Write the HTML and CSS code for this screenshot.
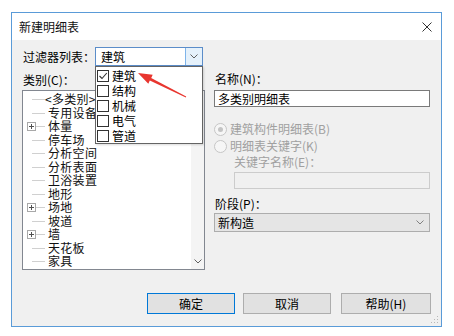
FILE: index.html
```html
<!DOCTYPE html>
<html lang="zh-CN">
<head>
<meta charset="utf-8">
<title>新建明细表</title>
<link rel="stylesheet" href="styles.css">
</head>
<body>
<div class="window">
  <div class="titlebar">
    <span class="title">新建明细表</span>
    <svg class="close" width="10" height="10" viewBox="0 0 10 10"><path d="M0.5 0.5 L9.5 9.5 M9.5 0.5 L0.5 9.5" stroke="#333" stroke-width="1" fill="none"/></svg>
  </div>
  <div class="content">
    <div class="columns">
      <div class="left">
        <div class="filter-row">
          <span class="label filter-label">过滤器列表：</span>
          <div class="combo">
            <span class="combo-text">建筑</span>
            <span class="combo-btn"><svg width="8" height="5" viewBox="0 0 8 5"><path d="M0.5 0.5 L4 4 L7.5 0.5" stroke="#606060" fill="none"/></svg></span>
          </div>
        </div>
        <div class="label cat-label">类别(C)：</div>
        <div class="tree">
          <ul class="tree-list">
            <li class="tree-item"><span class="hline"></span><span class="item-text first">&lt;多类别&gt;</span></li>
            <li class="tree-item"><span class="hline"></span><span class="item-text">专用设备</span></li>
            <li class="tree-item"><span class="plus"></span><span class="hline"></span><span class="item-text">体量</span></li>
            <li class="tree-item"><span class="hline"></span><span class="item-text">停车场</span></li>
            <li class="tree-item"><span class="hline"></span><span class="item-text">分析空间</span></li>
            <li class="tree-item"><span class="hline"></span><span class="item-text">分析表面</span></li>
            <li class="tree-item"><span class="hline"></span><span class="item-text">卫浴装置</span></li>
            <li class="tree-item"><span class="hline"></span><span class="item-text">地形</span></li>
            <li class="tree-item"><span class="plus"></span><span class="hline"></span><span class="item-text">场地</span></li>
            <li class="tree-item"><span class="hline"></span><span class="item-text">坡道</span></li>
            <li class="tree-item"><span class="plus"></span><span class="hline"></span><span class="item-text">墙</span></li>
            <li class="tree-item"><span class="hline"></span><span class="item-text">天花板</span></li>
            <li class="tree-item"><span class="hline"></span><span class="item-text">家具</span></li>
            <li class="tree-item"><span class="hline"></span><span class="item-text">家具系统</span></li>
          </ul>
          <div class="scrollbar">
            <svg width="8" height="5" viewBox="0 0 8 5"><path d="M0.5 0.5 L4 4 L7.5 0.5" stroke="#606060" fill="none"/></svg>
          </div>
        </div>
      </div>
      <div class="right">
        <div class="label name-label">名称(N)：</div>
        <div class="input name-input">多类别明细表</div>
        <div class="radio-row r1"><span class="radio checked"></span><span class="disabled-text">建筑构件明细表(B)</span></div>
        <div class="radio-row r2"><span class="radio"></span><span class="disabled-text">明细表关键字(K)</span></div>
        <div class="label key-label disabled-text">关键字名称(E)：</div>
        <div class="input key-input"></div>
        <div class="label phase-label">阶段(P)：</div>
        <div class="select">
          <span>新构造</span>
          <svg width="8" height="5" viewBox="0 0 8 5"><path d="M0.5 0.5 L4 4 L7.5 0.5" stroke="#808080" fill="none"/></svg>
        </div>
      </div>
    </div>
    <div class="buttons">
      <div class="btn btn-ok">确定</div>
      <div class="btn btn-cancel">取消</div>
      <div class="btn btn-help">帮助(H)</div>
    </div>
    <svg class="grip" width="8" height="8" viewBox="0 0 8 8">
      <rect x="6" y="0" width="1" height="1" fill="#b8b8b8"/>
      <rect x="3" y="3" width="1" height="1" fill="#b8b8b8"/>
      <rect x="6" y="3" width="1" height="1" fill="#b8b8b8"/>
      <rect x="0" y="6" width="1" height="1" fill="#b8b8b8"/>
      <rect x="3" y="6" width="1" height="1" fill="#b8b8b8"/>
      <rect x="6" y="6" width="1" height="1" fill="#b8b8b8"/>
    </svg>
  </div>
  <ul class="popup">
    <li class="pop-item"><span class="check on"><svg width="10" height="10" viewBox="0 0 10 10"><path d="M1.5 5 L4 7.5 L8.8 2" stroke="#333" stroke-width="1.1" fill="none"/></svg></span><span>建筑</span></li>
    <li class="pop-item"><span class="check"></span><span>结构</span></li>
    <li class="pop-item"><span class="check"></span><span>机械</span></li>
    <li class="pop-item"><span class="check"></span><span>电气</span></li>
    <li class="pop-item"><span class="check"></span><span>管道</span></li>
  </ul>
</div>
<svg class="arrow" width="454" height="336" viewBox="0 0 454 336">
  <polygon points="138,73 152.7,74.8 151.2,77.9 186.2,96.6 185.8,97.4 149.8,80.6 148.3,83.8" fill="#e8362f"/>
</svg>
</body>
</html>
```

FILE: styles.css
```css
* { box-sizing: border-box; margin: 0; padding: 0; }
html, body { width: 454px; height: 336px; overflow: hidden; }
body {
  position: relative;
  background: #ffffff;
  font-family: "Noto Sans CJK SC", "Microsoft YaHei", sans-serif;
  font-size: 12px;
  color: #000;
}
ul { list-style: none; }

.window {
  position: relative;
  margin: 12px 0 0 11px;
  width: 431px;
  height: 315px;
  border: 1px solid #5a9bd8;
  background: #f0f0f0;
  display: flex;
  flex-direction: column;
}
.titlebar {
  height: 27px;
  flex: none;
  background: #fff;
  display: flex;
  align-items: center;
  justify-content: space-between;
  padding: 0 9px 0 7px;
}
.title { font-size: 12px; line-height: 14px; color: #111; }
.close { display: block; }

.content {
  flex: 1;
  position: relative;
  display: flex;
  flex-direction: column;
  padding: 7px 10px 12px 10px;
}
.columns { display: flex; gap: 9px; }
.left { width: 183px; display: flex; flex-direction: column; }
.right { width: 216px; display: flex; flex-direction: column; }

.label { line-height: 14px; height: 14px; white-space: nowrap; }
.filter-row { display: flex; align-items: center; height: 19px; }
.filter-label { width: 73px; padding-left: 1px; }
.combo {
  width: 108px;
  height: 19px;
  border: 1px solid #5b8dc9;
  background: #fff;
  display: flex;
  align-items: stretch;
}
.combo-text { flex: 1; padding-left: 5px; line-height: 17px; }
.combo-btn {
  width: 17px;
  background: #e5f1fb;
  border-left: 1px solid #7eb4ea;
  display: flex;
  align-items: center;
  justify-content: center;
}
.combo-btn svg, .scrollbar svg, .select svg { display: block; }

.cat-label { margin-top: 7px; padding-left: 1px; }
.tree {
  margin-top: 3px;
  height: 180px;
  border: 1px solid #828790;
  background: #fff;
  position: relative;
  display: flex;
  overflow: hidden;
}
.tree-list { flex: 1; padding-top: 1px; position: relative; }
.tree-item {
  height: 13.5px;
  line-height: 13.5px;
  display: flex;
  align-items: center;
  position: relative;
  padding-left: 25px;
  letter-spacing: 0.3px;
  color: #111;
}
.hline {
  position: absolute;
  left: 9px;
  width: 13px;
  top: 7px;
  border-top: 1px solid #d0d0d0;
}
.plus {
  position: absolute;
  left: 4px;
  top: 3px;
  width: 9px;
  height: 9px;
  border: 1px solid #a8a8a8;
  background: #fff;
  z-index: 1;
}
.plus::before, .plus::after {
  content: "";
  position: absolute;
  background: #505050;
}
.plus::before { left: 1px; right: 1px; top: 3px; height: 1px; }
.plus::after { top: 1px; bottom: 1px; left: 3px; width: 1px; }
.item-text.first { margin-left: -3px; }
.scrollbar {
  width: 13px;
  background: #f4f4f4;
  display: flex;
  align-items: flex-end;
  justify-content: center;
  padding-bottom: 5px;
}

.name-label { margin-top: 25px; padding-left: 1px; }
.input {
  height: 17px;
  border: 1px solid #7a7a7a;
  background: #fff;
  line-height: 15px;
  padding-left: 3px;
}
.name-input { margin-top: 4px; }
.radio-row { height: 14px; display: flex; align-items: center; gap: 3px; }
.r1 { margin-top: 15px; }
.r2 { margin-top: 3px; }
.radio {
  width: 13px;
  height: 13px;
  border-radius: 50%;
  border: 1px solid #c6c6c6;
  background: #f6f6f6;
  position: relative;
}
.radio.checked::after {
  content: "";
  position: absolute;
  left: 3px;
  top: 3px;
  width: 5px;
  height: 5px;
  border-radius: 50%;
  background: #c4c4c4;
}
.disabled-text { color: #a0a0a0; line-height: 14px; }
.key-label { margin-top: 2px; padding-left: 20px; }
.key-input {
  margin-top: 3px;
  margin-left: 20px;
  background: #f0f0f0;
  border-color: #cccccc;
}
.phase-label { margin-top: 8px; padding-left: 1px; }
.select {
  margin-top: 2px;
  height: 19px;
  border: 1px solid #adadad;
  background: #e5e5e5;
  display: flex;
  align-items: center;
  justify-content: space-between;
  padding: 0 5px 0 3px;
  line-height: 17px;
}

.buttons {
  margin-top: auto;
  display: flex;
  justify-content: flex-end;
}
.btn {
  height: 21px;
  line-height: 19px;
  text-align: center;
  background: #e1e1e1;
  border: 1px solid #adadad;
}
.btn-ok { width: 88px; border-color: #0078d7; }
.btn-cancel { width: 88px; margin-left: 8px; }
.btn-help { width: 90px; margin-left: 10px; }
.grip { position: absolute; right: 2px; bottom: 2px; display: block; }

.popup {
  position: absolute;
  left: 83px;
  top: 53px;
  width: 108px;
  height: 78px;
  background: #fff;
  border: 1px solid #646464;
  padding-top: 1px;
  box-shadow: 1px 1px 2px rgba(0,0,0,0.15);
  z-index: 5;
}
.pop-item {
  height: 15px;
  display: flex;
  align-items: center;
  padding-left: 1px;
  gap: 3px;
  line-height: 15px;
}
.check {
  width: 12px;
  height: 12px;
  border: 1px solid #333;
  background: #fff;
  display: flex;
  align-items: center;
  justify-content: center;
}
.check svg { display: block; }

.arrow { position: absolute; left: 0; top: 0; pointer-events: none; z-index: 10; }
```
